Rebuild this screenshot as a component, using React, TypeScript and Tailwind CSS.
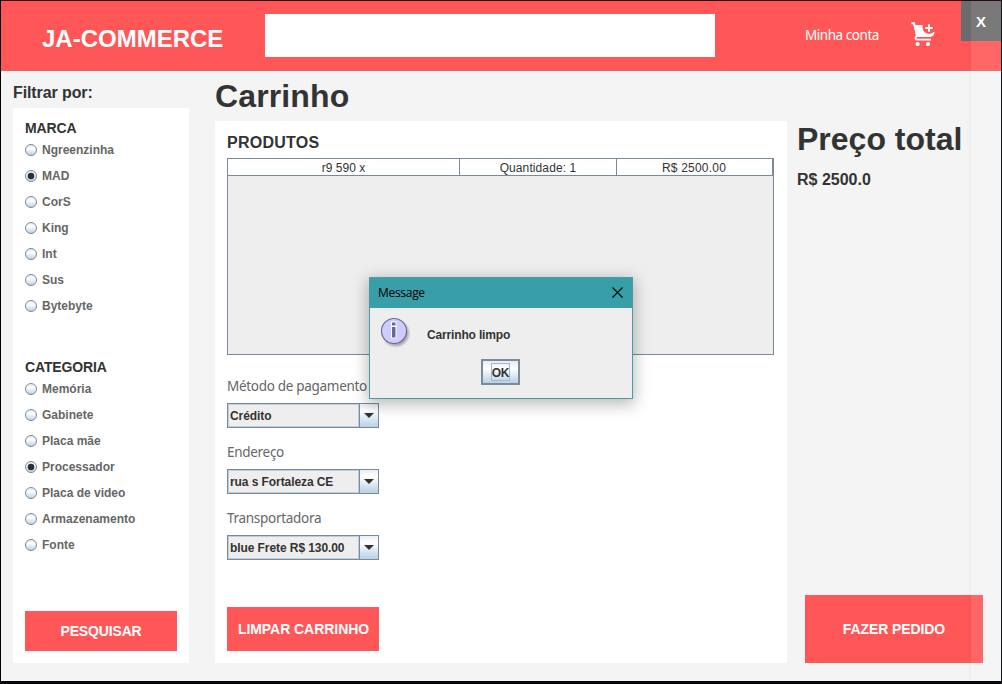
import React from "react";

const brands = ["Ngreenzinha", "MAD", "CorS", "King", "Int", "Sus", "Bytebyte"];
const categories = [
  "Memória",
  "Gabinete",
  "Placa mãe",
  "Processador",
  "Placa de video",
  "Armazenamento",
  "Fonte",
];

function Radio({ checked }: { checked: boolean }) {
  return (
    <svg width="12" height="12" viewBox="0 0 12 12" className="shrink-0">
      <defs>
        <linearGradient id="radio-fill" x1="0" y1="0" x2="0" y2="1">
          <stop offset="0" stopColor="#dce7f2" />
          <stop offset="0.35" stopColor="#ffffff" />
          <stop offset="1" stopColor="#b8cfe5" />
        </linearGradient>
      </defs>
      <circle cx="6" cy="6" r="5.5" fill="url(#radio-fill)" stroke="#7a8a99" strokeWidth="1" />
      {checked && <circle cx="6" cy="6" r="3.3" fill="#2b2f36" />}
    </svg>
  );
}

function RadioGroup({ items, selected }: { items: string[]; selected: string }) {
  return (
    <div className="flex flex-col">
      {items.map((item) => (
        <div key={item} className="flex h-[26px] items-center gap-[5px]">
          <Radio checked={item === selected} />
          <span className="text-[12px] leading-[14px] font-bold whitespace-nowrap text-[#666666]">{item}</span>
        </div>
      ))}
    </div>
  );
}

function Select({ label, value }: { label: string; value: string }) {
  return (
    <div className="flex h-[66px] flex-col">
      <div className="h-[28px] pt-px font-['Noto_Sans',sans-serif] text-[13.5px] leading-[20px] tracking-[-0.3px] whitespace-nowrap text-[#666666]">
        {label}
      </div>
      <div className="flex h-[25px] w-[152px] border border-[#7a8a99] bg-[#b8cfe5]">
        <div className="m-px mr-0 flex w-[129px] items-center bg-[#eeeeee] pl-px text-[12px] leading-[14px] font-bold tracking-[-0.08px] whitespace-nowrap text-[#333333]">
          {value}
        </div>
        <div className="ml-px flex flex-1 items-center justify-center border-l border-[#7a8a99] bg-linear-to-b from-[#e8f0f8] via-white via-30% to-[#b8cfe5]">
          <svg width="10" height="5" viewBox="0 0 10 5">
            <path d="M0 0H10L5 5Z" fill="#333333" />
          </svg>
        </div>
      </div>
    </div>
  );
}

function CartIcon() {
  return (
    <svg width="24" height="26" viewBox="0 0 24 26">
      <path
        d="M0.3 1.2H3L5.8 13.4L4.7 15.6Q4.1 17.6 6 17.6H20"
        fill="none"
        stroke="#ffffff"
        strokeWidth="1.9"
      />
      <path
        d="M3.2 3H11.8Q10.8 7.4 13.6 10.2Q18 14 23.8 9.6Q23 14.9 18.6 15.1H5.4Z"
        fill="#ffffff"
      />
      <path d="M18 2.2V9.8M14.2 6H21.8" stroke="#ffffff" strokeWidth="1.9" />
      <circle cx="6.6" cy="22" r="2.1" fill="#ffffff" />
      <circle cx="17" cy="22" r="2.1" fill="#ffffff" />
    </svg>
  );
}

function MessageDialog() {
  return (
    <div className="absolute top-[276px] left-[368px] flex h-[122px] w-[264px] flex-col border border-[#4a9ca4] bg-[#eeeeee] shadow-[0_4px_14px_2px_rgba(0,0,0,0.26)]">
      <div className="flex h-[30px] shrink-0 items-center justify-between bg-[#389fa9] pr-[9px] pb-px pl-[8px]">
        <span className="pt-px font-['Open_Sans',sans-serif] text-[12px] leading-[16px] tracking-[-0.3px] text-black">
          Message
        </span>
        <svg width="11" height="11" viewBox="0 0 11 11">
          <path d="M0.5 0.5L10.5 10.5M10.5 0.5L0.5 10.5" stroke="#000000" strokeWidth="1.1" />
        </svg>
      </div>
      <div className="flex h-[51px] shrink-0 pt-[9px] pl-[10px]">
        <svg width="32" height="32" viewBox="0 0 32 32">
          <defs>
            <filter id="soft" x="-20%" y="-20%" width="140%" height="140%">
              <feGaussianBlur stdDeviation="1.2" />
            </filter>
          </defs>
          <circle cx="15.8" cy="16.2" r="13" fill="#888888" opacity="0.7" filter="url(#soft)" />
          <circle cx="14" cy="14" r="12.5" fill="#ccccff" stroke="#666699" strokeWidth="1.1" />
          <path d="M11 4.5H16.5V21.5H11Z" fill="#ffffff" />
          <path d="M12 5.5H15.5V8.5H12ZM12 10H15.5V20.5H12Z" fill="#666699" />
        </svg>
        <span className="mt-[11px] ml-[15px] text-[12px] leading-[14px] font-bold tracking-[-0.16px] whitespace-nowrap text-[#333333]">
          Carrinho limpo
        </span>
      </div>
      <div className="flex justify-center pr-[1px]">
        <div className="flex h-[26px] w-[39px] items-center justify-center border-2 border-[#7a8a99] bg-linear-to-b from-[#e4edf6] via-white via-35% to-[#b8cfe5]">
          <div className="flex h-[18px] w-[19px] items-center justify-center border border-[#a3b8cc] pt-px text-[12px] leading-[14px] font-bold tracking-[-0.3px] text-[#333333]">
            OK
          </div>
        </div>
      </div>
    </div>
  );
}

export default function App() {
  return (
    <div className="relative flex h-[684px] w-[1002px] flex-col overflow-hidden border-t border-r border-b-3 border-l border-t-[#280808] border-r-[#101522] border-b-[#05060c] border-l-black bg-[#f4f4f4] font-['Liberation_Sans',Arial,sans-serif] text-[#333333]">
      <header className="flex h-[70px] shrink-0 border-b border-[#d9686c] bg-[#ff5757]">
        <div className="w-[264px] pt-[24px] pl-[41px] text-[24px] leading-[28px] font-bold whitespace-nowrap text-white">
          JA-COMMERCE
        </div>
        <div className="mt-[13px] h-[43px] w-[450px] bg-white" />
        <div className="mt-[24px] ml-[90px] w-[106px] font-['Noto_Sans',sans-serif] text-[13.5px] leading-[20px] tracking-[-0.45px] whitespace-nowrap text-white">
          Minha conta
        </div>
        <div className="mt-[21px]">
          <CartIcon />
        </div>
      </header>

      <main className="flex flex-1 pl-[12px]">
        <aside className="flex w-[176px] flex-col">
          <h2 className="h-[37px] pt-[12px] text-[16px] leading-[19px] font-bold tracking-[-0.1px]">Filtrar por:</h2>
          <div className="flex h-[555px] flex-col bg-white px-[12px]">
            <h3 className="h-[29px] pt-[12px] text-[14px] leading-[17px] font-bold tracking-[-0.1px]">MARCA</h3>
            <RadioGroup items={brands} selected="MAD" />
            <h3 className="mt-[40px] h-[17px] text-[14px] leading-[17px] font-bold tracking-[-0.15px]">CATEGORIA</h3>
            <RadioGroup items={categories} selected="Processador" />
            <button className="mt-[53px] h-[40px] w-[152px] bg-[#ff5757] text-[14px] font-bold tracking-[-0.15px] text-white">
              PESQUISAR
            </button>
          </div>
        </aside>

        <section className="ml-[26px] flex w-[572px] flex-col">
          <h1 className="h-[50px] pt-[6px] text-[32px] leading-[38px] font-bold tracking-[0.12px]">Carrinho</h1>
          <div className="flex h-[542px] flex-col bg-white px-[12px]">
            <h2 className="h-[37px] pt-[12px] text-[16px] leading-[19px] font-bold tracking-[0.25px]">PRODUTOS</h2>
            <div className="h-[197px] w-[547px] border border-[#7a8a99] bg-[#eeeeee]">
              <div className="flex h-[17px] border-b border-[#7a8a99] bg-white text-center text-[12px] leading-[18px]">
                <div className="w-[232px] border-r border-[#7a8a99]">r9 590 x</div>
                <div className="w-[157px] border-r border-[#7a8a99] tracking-[0.1px]">Quantidade: 1</div>
                <div className="w-[156px] border-r border-[#7a8a99] pr-px tracking-[0.2px]">R$ 2500.00</div>
              </div>
            </div>
            <div className="mt-[20px] flex flex-col">
              <Select label="Método de pagamento" value="Crédito" />
              <Select label="Endereço" value="rua s Fortaleza CE" />
              <Select label="Transportadora" value="blue Frete R$ 130.00" />
            </div>
            <button className="mt-[34px] h-[44px] w-[152px] bg-[#ff5757] pl-px text-[14px] font-bold tracking-[-0.05px] whitespace-nowrap text-white">
              LIMPAR CARRINHO
            </button>
          </div>
        </section>

        <section className="ml-[10px] flex w-[186px] flex-col">
          <h1 className="h-[99px] pt-[49px] text-[32px] leading-[38px] font-bold whitespace-nowrap">Preço total</h1>
          <p className="text-[16px] leading-[19px] font-bold">R$ 2500.0</p>
          <button className="mt-[406px] ml-[8px] h-[68px] w-[178px] shrink-0 bg-[#ff5757] text-[14px] font-bold tracking-[-0.1px] text-white">
            FAZER PEDIDO
          </button>
        </section>
      </main>

      <div className="absolute top-0 left-[960px] flex h-[40px] w-[40px] items-center justify-center bg-[#6c6c6c] pt-[2px] text-[15px] font-bold text-white">
        X
      </div>
      <div className="absolute top-0 left-[970px] h-[683px] w-[30px] bg-white/9 shadow-[-1px_0_4px_rgba(0,0,0,0.04)]" />
      <MessageDialog />
    </div>
  );
}
